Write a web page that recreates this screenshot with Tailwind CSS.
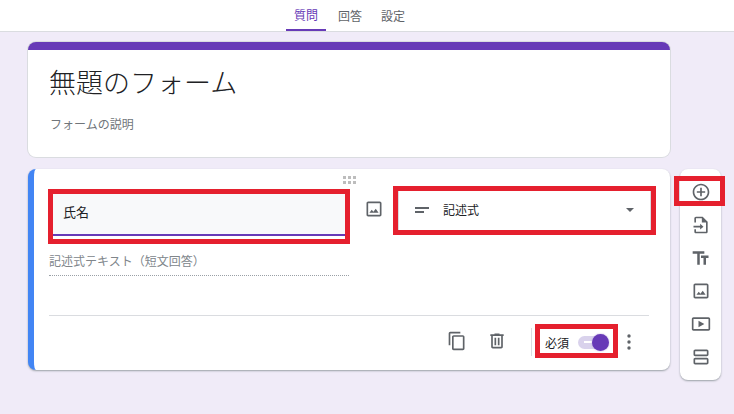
<!DOCTYPE html>
<html lang="ja">

<head>
    <meta charset="UTF-8">
    <meta name="viewport" content="width=device-width, initial-scale=1.0">
    <title>無題のフォーム</title>
    <script src="https://cdn.jsdelivr.net/npm/@tailwindcss/browser@4"></script>
</head>

<body class="w-[734px] h-[414px] overflow-hidden bg-[#f0ebf8] font-['Noto_Sans_CJK_JP',sans-serif] text-[#202124]">
    <!-- tabs -->
    <nav class="h-[32px] bg-white border-b border-[#dadce0] flex pl-[286px] text-[12px] text-[#5f6368]">
        <div class="w-[40px] h-[31px] flex items-center justify-center text-[#673ab7] border-b-[2px] border-[#673ab7] pt-[1px]">質問</div>
        <div class="w-[24px] h-[31px] flex items-center justify-center ml-[12px]">回答</div>
        <div class="w-[24px] h-[31px] flex items-center justify-center ml-[19px]">設定</div>
    </nav>

    <main class="flex gap-[10px] pl-[28px] pt-[10px]">
        <div class="w-[642px] flex flex-col gap-[12px]">
            <!-- title card -->
            <section class="h-[115px] bg-white rounded-lg border-t-[8px] border-[#673ab7] shadow-[0_0_0_1px_#dadce0] pl-[22px]">
                <h1 class="text-[27px] leading-[38px] font-light text-[#202124] pt-[13px] -ml-[1px]">無題のフォーム</h1>
                <p class="text-[12px] leading-[18px] text-[#70757a] mt-[14px]">フォームの説明</p>
            </section>

            <!-- question card -->
            <section class="relative h-[201px] bg-white rounded-lg border-l-[6px] border-[#4285f4] shadow-[0_1px_2px_#9aa0a6] pl-[15px] pr-[21px]">
                <svg class="absolute left-[309px] top-[7px]" width="14" height="8" viewBox="0 0 14 8" fill="#bdbdbd">
                    <rect x="0" y="0" width="3" height="3"/><rect x="5" y="0" width="3" height="3"/><rect x="10" y="0" width="3" height="3"/>
                    <rect x="0" y="5" width="3" height="3"/><rect x="5" y="5" width="3" height="3"/><rect x="10" y="5" width="3" height="3"/>
                </svg>

                <div class="h-[147px] border-b border-[#dadce0] flex pt-[17px]">
                    <div class="w-[302px] shrink-0 -ml-[1px]">
                        <div class="h-[55px] mt-[3px] border-[5px] border-[#e5202e] pb-[3px]">
                            <div class="w-full h-full bg-[#f8f9fa] border-b-[2px] border-[#673ab7] flex items-center pl-[10px] pb-[5px] text-[13px] text-[#202124]">氏名</div>
                        </div>
                        <div class="w-[300px] ml-[1px] mt-[7px] h-[25px] border-b border-dotted border-[#9aa0a6] text-[12px] leading-[20px] text-[#80868b]">記述式テキスト（短文回答）</div>
                    </div>

                    <div class="w-[43px] shrink-0 flex justify-center pl-[5px] pt-[13px]">
                        <svg class="w-[20px] h-[20px]" viewBox="0 0 24 24" fill="#5f6368">
                            <path d="M19 5v14H5V5h14m0-2H5c-1.100 0-2 .9-2 2v14c0 1.100.9 2 2 2h14c1.100 0 2-.9 2-2V5c0-1.100-.9-2-2-2z"/>
                            <path d="M14.100 11.800l-2.800 3.600-2-2.400L6.500 16.600h11z"/>
                        </svg>
                    </div>

                    <div class="w-[263px] h-[49px] shrink-0 border-[5px] border-[#e5202e] text-[12px]">
                        <div class="w-full h-full border-x border-[#dadce0] flex items-center pl-[16px] pr-[16px] pb-[1px]">
                            <svg class="w-[16px] h-[8px]" viewBox="0 0 16 8" fill="#5f6368">
                                <rect x="0" y="1" width="14" height="2"/><rect x="0" y="5" width="9" height="2"/>
                            </svg>
                            <span class="ml-[12px] flex-1">記述式</span>
                            <svg class="w-[8px] h-[4px]" viewBox="0 0 10 5" fill="#5f6368"><path d="M0 0h10L5 5z"/></svg>
                        </div>
                    </div>
                </div>

                <div class="h-[52px] flex items-center justify-end">
                    <svg class="w-[20px] h-[20px] mr-[20px] -mt-[2px]" viewBox="0 0 24 24" fill="#5f6368">
                        <path d="M16 1H4c-1.100 0-2 .9-2 2v14h2V3h12V1zm3 4H8c-1.100 0-2 .9-2 2v14c0 1.100.9 2 2 2h11c1.100 0 2-.9 2-2V7c0-1.100-.9-2-2-2zm0 16H8V7h11v14z"/>
                    </svg>
                    <svg class="w-[20px] h-[20px] mr-[24px] -mt-[2px]" viewBox="0 0 24 24" fill="#5f6368">
                        <path d="M15 4V3H9v1H4v2h1v13c0 1.100.9 2 2 2h10c1.100 0 2-.9 2-2V6h1V4h-5zm2 15H7V6h10v13z"/>
                        <path d="M9 8h2v9H9zm4 0h2v9h-2z"/>
                    </svg>
                    <div class="w-px h-[28px] bg-[#dadce0] mr-[3px] -mt-[1px]"></div>
                    <div class="w-[83px] h-[34px] border-[5px] border-[#e5202e] flex items-center pl-[5px] pt-[4px] text-[12px] -mt-[3px]">
                        必須
                        <span class="relative ml-[9px] w-[31px] h-[13px] rounded-full bg-[#d9d2ec] block">
                            <span class="absolute left-[6px] top-[5px] w-[8px] h-[2px] bg-white"></span>
                            <span class="absolute right-0 -top-[2px] w-[17px] h-[17px] rounded-full bg-[#673ab7] shadow-[0_0_2px_#b9a6dd]"></span>
                        </span>
                    </div>
                    <svg class="w-[4px] h-[16px] ml-[9px] mr-[18px] -mt-[1px]" viewBox="0 0 4 16" fill="#5f6368">
                        <circle cx="2" cy="2" r="1.700"/><circle cx="2" cy="8" r="1.700"/><circle cx="2" cy="14" r="1.700"/>
                    </svg>
                </div>
            </section>
        </div>

        <!-- side toolbar -->
        <aside class="relative w-[41px] h-[211px] mt-[127px] bg-white rounded-lg shadow-[0_1px_2px_#9aa0a6] flex flex-col items-center pt-[13px] gap-[13px]">
            <div class="absolute -left-[6px] top-[7px] w-[51px] h-[30px] border-[5px] border-[#e5202e]"></div>
            <svg class="w-[20px] h-[20px]" viewBox="0 0 24 24" fill="#5f6368">
                <path d="M13 7h-2v4H7v2h4v4h2v-4h4v-2h-4V7zm-1-5C6.480 2 2 6.480 2 12s4.480 10 10 10 10-4.480 10-10S17.520 2 12 2zm0 18c-4.410 0-8-3.590-8-8s3.590-8 8-8 8 3.590 8 8-3.590 8-8 8z"/>
            </svg>
            <svg class="w-[20px] h-[20px]" viewBox="0 0 24 24" fill="#5f6368">
                <path d="M14 2H6c-1.100 0-2 .9-2 2v5h2V4h7v5h5v11H6v-3H4v3c0 1.100.9 2 2 2h12c1.100 0 2-.9 2-2V8l-6-6z"/>
                <path d="M11 10.500l4 3.500-4 3.500V15H3v-2h8z"/>
            </svg>
            <svg class="w-[20px] h-[20px]" viewBox="0 0 24 24" fill="#5f6368">
                <path d="M2 4v3h5.500v13h3V7H16V4H2zm19 5h-9v3h3v8h3v-8h3V9z"/>
            </svg>
            <svg class="w-[20px] h-[20px]" viewBox="0 0 24 24" fill="#5f6368">
                <path d="M19 5v14H5V5h14m0-2H5c-1.100 0-2 .9-2 2v14c0 1.100.9 2 2 2h14c1.100 0 2-.9 2-2V5c0-1.100-.9-2-2-2z"/>
                <path d="M14.100 11.800l-2.800 3.600-2-2.400L6.500 16.600h11z"/>
            </svg>
            <svg class="w-[20px] h-[20px]" viewBox="0 0 24 24" fill="#5f6368">
                <path d="M21 4H3c-1.100 0-2 .9-2 2v12c0 1.100.9 2 2 2h18c1.100 0 2-.9 2-2V6c0-1.100-.9-2-2-2zm0 14H3V6h18v12z"/>
                <path d="M9 8v8l7-4z"/>
            </svg>
            <svg class="w-[20px] h-[20px]" viewBox="0 0 24 24" fill="#5f6368">
                <path d="M19 13H5c-1.100 0-2 .9-2 2v4c0 1.100.9 2 2 2h14c1.100 0 2-.9 2-2v-4c0-1.100-.9-2-2-2zm0 6H5v-4h14v4zM19 3H5c-1.100 0-2 .9-2 2v4c0 1.100.9 2 2 2h14c1.100 0 2-.9 2-2V5c0-1.100-.9-2-2-2zm0 6H5V5h14v4z"/>
            </svg>
        </aside>
    </main>
</body>

</html>
